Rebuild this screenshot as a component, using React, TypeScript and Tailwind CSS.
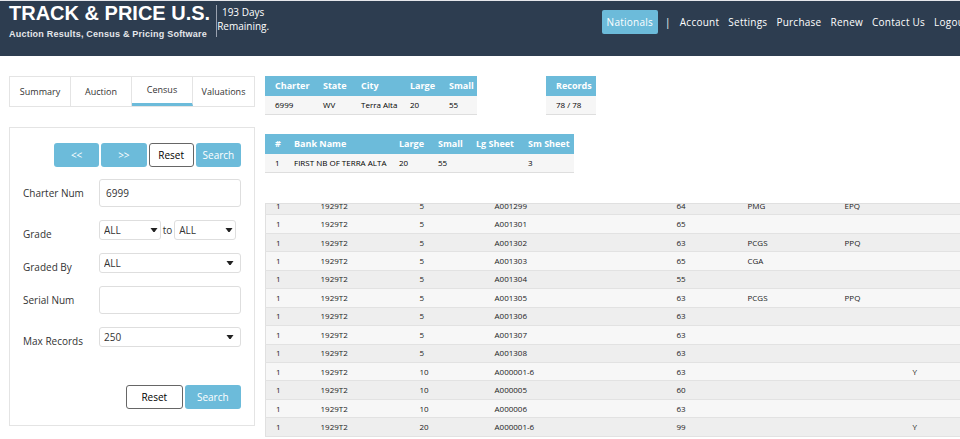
import { useState } from 'react';
import clsx from 'clsx';

const tabs = ['Summary', 'Auction', 'Census', 'Valuations'];
const links = ['Account', 'Settings', 'Purchase', 'Renew', 'Contact Us', 'Logout'];

type Note = {
  denom: string;
  serial: string;
  grade: string;
  gradedBy?: string;
  quality?: string;
  flag?: string;
};

const notes: Note[] = [
  { denom: '5', serial: 'A001299', grade: '64', gradedBy: 'PMG', quality: 'EPQ' },
  { denom: '5', serial: 'A001301', grade: '65' },
  { denom: '5', serial: 'A001302', grade: '63', gradedBy: 'PCGS', quality: 'PPQ' },
  { denom: '5', serial: 'A001303', grade: '65', gradedBy: 'CGA' },
  { denom: '5', serial: 'A001304', grade: '55' },
  { denom: '5', serial: 'A001305', grade: '63', gradedBy: 'PCGS', quality: 'PPQ' },
  { denom: '5', serial: 'A001306', grade: '63' },
  { denom: '5', serial: 'A001307', grade: '63' },
  { denom: '5', serial: 'A001308', grade: '63' },
  { denom: '10', serial: 'A000001-6', grade: '63', flag: 'Y' },
  { denom: '10', serial: 'A000005', grade: '60' },
  { denom: '10', serial: 'A000006', grade: '63' },
  { denom: '20', serial: 'A000001-6', grade: '99', flag: 'Y' },
];

function Header() {
  return (
    <header className="flex items-start overflow-hidden whitespace-nowrap border-t border-gray-200 bg-[#2d3d50] pb-[14px] pl-[9px] text-white">
      <div className="pt-px">
        <h1 className="font-['Liberation_Sans',sans-serif] text-[20px] font-bold leading-[22px]">TRACK &amp; PRICE U.S.</h1>
        <p className="mt-1 font-['Liberation_Sans',sans-serif] text-[9px] font-bold leading-3 tracking-wide text-gray-200">
          Auction Results, Census &amp; Pricing Software
        </p>
      </div>
      <p className="ml-[6px] mt-1 mb-[5px] border-l border-gray-400 pb-1 text-center text-[10px] leading-[14px]">
        193 Days
        <br />
        Remaining.
      </p>
      <nav className="-mr-2 ml-auto mt-[9px] flex items-center gap-[9px] text-[10px] tracking-wide">
        <a href="#nationals" className="rounded-xs bg-[#6cbbda] px-[5px] py-1 leading-4">Nationals</a>
        <span className="-ml-[2px]">|</span>
        {links.map((link) => (
          <a key={link} href={`#${link}`}>{link}</a>
        ))}
      </nav>
    </header>
  );
}

type SelectProps = {
  id: string;
  label?: string;
  options: string[];
  className: string;
  arrowClassName?: string;
};

function Select({ id, label, options, className, arrowClassName = 'right-[7px]' }: SelectProps) {
  return (
    <div className={clsx('relative', className)}>
      <select
        id={id}
        aria-label={label}
        className="block h-5 w-full appearance-none rounded-[3px] border border-[#dedede] bg-white pl-1 text-[10px] leading-4"
      >
        {options.map((option) => (
          <option key={option}>{option}</option>
        ))}
      </select>
      <svg viewBox="0 0 8 4" className={clsx('pointer-events-none absolute top-2 h-1 w-2 fill-[#222]', arrowClassName)}>
        <path d="M0.5 0h7L4.6 4H3.4z" />
      </svg>
    </div>
  );
}

const blueButton = 'h-6 rounded-[3px] bg-[#6cbbda] text-white';
const outlineButton = 'h-6 rounded-[3px] border border-[#666] bg-white text-black';
const textInput = 'h-7 w-full rounded-[3px] border border-[#dedede] px-[6px]';
const fieldRow = 'grid grid-cols-[76px_1fr] items-center';

function SearchForm() {
  const [charter, setCharter] = useState('6999');
  const [serial, setSerial] = useState('');

  return (
    <form
      className="mt-5 border border-[#e4e4e4] pt-[15px] pr-[13px] pb-4 pl-[13px] text-[10px]"
      onSubmit={(e) => e.preventDefault()}
    >
      <div className="ml-[31px] grid grid-cols-4 gap-[2px]">
        <button type="button" className={blueButton}>&lt;&lt;</button>
        <button type="button" className={blueButton}>&gt;&gt;</button>
        <button type="button" className={outlineButton}>Reset</button>
        <button type="submit" className={blueButton}>Search</button>
      </div>

      <div className="mt-3 flex flex-col gap-[13px]">
        <div className={fieldRow}>
          <label htmlFor="charter">Charter Num</label>
          <input id="charter" className={textInput} value={charter} onChange={(e) => setCharter(e.target.value)} />
        </div>
        <div className={fieldRow}>
          <label htmlFor="grade-from" className="pt-2 leading-3">Grade</label>
          <div className="flex items-center pr-[5px]">
            <Select id="grade-from" options={['ALL']} className="flex-1" arrowClassName="right-[3px]" />
            <span className="px-[2px]">to</span>
            <Select id="grade-to" label="Grade to" options={['ALL']} className="flex-1" arrowClassName="right-[3px]" />
          </div>
        </div>
        <div className={fieldRow}>
          <label htmlFor="graded-by" className="pt-2 leading-3">Graded By</label>
          <Select id="graded-by" options={['ALL', 'PMG', 'PCGS', 'CGA']} className="w-full" />
        </div>
        <div className={fieldRow}>
          <label htmlFor="serial">Serial Num</label>
          <input id="serial" className={textInput} value={serial} onChange={(e) => setSerial(e.target.value)} />
        </div>
        <div className={fieldRow}>
          <label htmlFor="max-records" className="pt-2 leading-3">Max Records</label>
          <Select id="max-records" options={['250', '500']} className="w-full" />
        </div>
      </div>

      <div className="mt-[38px] ml-auto grid w-[115px] grid-cols-2 gap-[2px]">
        <button type="reset" className={outlineButton}>Reset</button>
        <button type="submit" className={blueButton}>Search</button>
      </div>
    </form>
  );
}

function SummaryTable({ columns, cells, widths }: { columns: string[]; cells: string[]; widths: string[] }) {
  return (
    <table className="w-min table-fixed whitespace-nowrap text-left">
      <thead className="bg-[#6cbbda] text-[9px] leading-[20px] text-white">
        <tr>
          {columns.map((column, i) => (
            <th key={column} className={clsx('p-0 pl-[10px] font-bold', widths[i])}>{column}</th>
          ))}
        </tr>
      </thead>
      <tbody className="bg-[#f6f6f6] text-[8px] leading-[18px] text-black">
        <tr className="border-b border-[#dedede]">
          {cells.map((cell, i) => (
            <td key={columns[i]} className="p-0 pl-[10px]">{cell}</td>
          ))}
        </tr>
      </tbody>
    </table>
  );
}

function NotesTable() {
  return (
    <div className="mt-[30px] flex h-[234px] flex-col justify-end overflow-hidden border-t border-[#e0e0e0]">
      <table className="h-[240px] w-full shrink-0 table-fixed border-l border-[#e0e0e0] text-left text-[8px] leading-[16px] text-[#222]">
        <colgroup>
          <col className="w-[45px]" />
          <col className="w-[99px]" />
          <col className="w-[75px]" />
          <col className="w-[182px]" />
          <col className="w-[71px]" />
          <col className="w-[97px]" />
          <col className="w-[68px]" />
          <col />
        </colgroup>
        <tbody>
          {notes.map((note, i) => (
            <tr key={i} className="border-b border-[#e2e2e2] odd:bg-[#eeeeee] even:bg-[#f7f7f7]">
              {['1', '1929T2', note.denom, note.serial, note.grade, note.gradedBy, note.quality, note.flag].map((cell, j) => (
                <td key={j} className="p-0 pl-[10px]">{cell}</td>
              ))}
            </tr>
          ))}
        </tbody>
      </table>
    </div>
  );
}

export default function App() {
  const [activeTab, setActiveTab] = useState('Census');

  return (
    <div className="overflow-hidden bg-white font-['Open_Sans','Noto_Sans',sans-serif] text-[#333]">
      <Header />
      <main className="flex items-start gap-[10px] pt-5 pl-[9px]">
        <aside className="w-[246px] shrink-0">
          <div role="tablist" className="grid grid-cols-4 divide-x divide-[#e4e4e4] border border-[#e4e4e4] text-[9px]">
            {tabs.map((tab) => (
              <button
                key={tab}
                type="button"
                role="tab"
                aria-selected={tab === activeTab}
                onClick={() => setActiveTab(tab)}
                className={clsx('h-[29px]', tab === activeTab && 'border-b-3 border-b-[#6cbbda]')}
              >
                {tab}
              </button>
            ))}
          </div>
          <SearchForm />
        </aside>

        <section className="min-w-0 flex-1">
          <div className="flex gap-[69px]">
            <SummaryTable
              columns={['Charter', 'State', 'City', 'Large', 'Small']}
              cells={['6999', 'WV', 'Terra Alta', '20', '55']}
              widths={['w-[48px]', 'w-[38px]', 'w-[49px]', 'w-[39px]', 'w-[38px]']}
            />
            <SummaryTable columns={['Records']} cells={['78 / 78']} widths={['w-[50px]']} />
          </div>
          <div className="mt-[19px]">
            <SummaryTable
              columns={['#', 'Bank Name', 'Large', 'Small', 'Lg Sheet', 'Sm Sheet']}
              cells={['1', 'FIRST NB OF TERRA ALTA', '20', '55', '', '3']}
              widths={['w-[19px]', 'w-[105px]', 'w-[39px]', 'w-[38px]', 'w-[52px]', 'w-[56px]']}
            />
          </div>
          <NotesTable />
        </section>
      </main>
    </div>
  );
}
